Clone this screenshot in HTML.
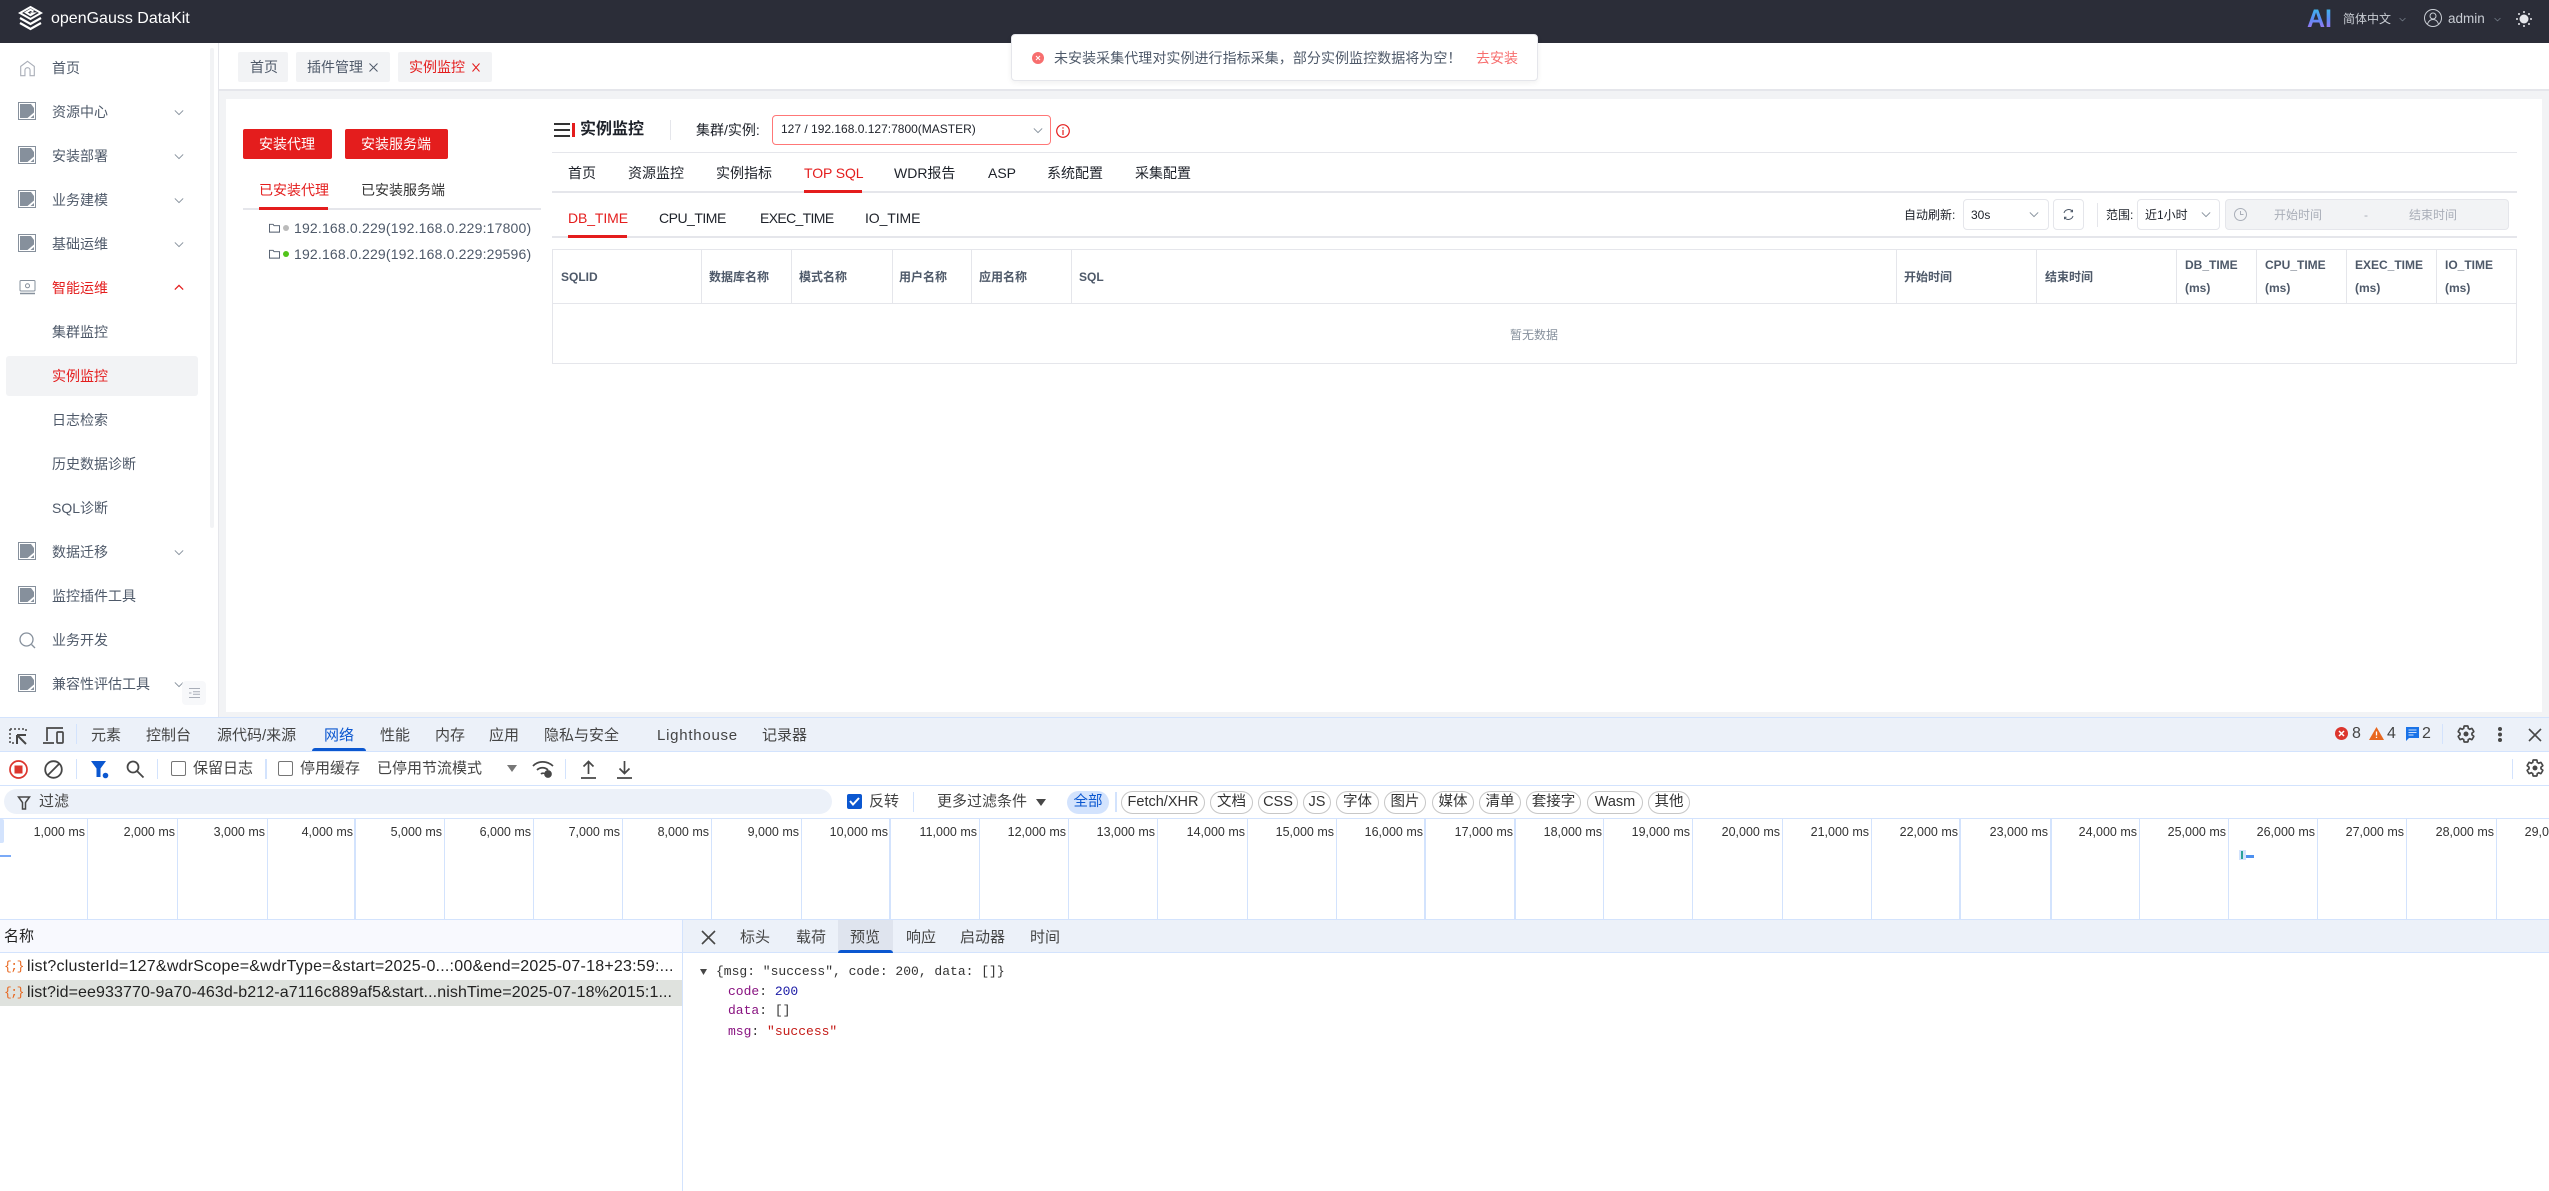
<!DOCTYPE html>
<html lang="zh"><head><meta charset="utf-8"><title>openGauss DataKit</title>
<style>
*{box-sizing:border-box}
html,body{margin:0;padding:0;width:2549px;height:1191px;overflow:hidden;background:#fff;font-family:"Liberation Sans","Noto Sans CJK SC",sans-serif}
.a{position:absolute}
.t{position:absolute;white-space:nowrap;line-height:20px;height:20px}
.s{font-size:14px;color:#4e5969}
.r{color:#e41d1d!important}
.th{font-size:12px;font-weight:700;color:#4e5969}
.m{font-size:14px;color:#1d2129}
.d{font-size:15px;color:#444;}
.chip{position:absolute;top:791px;height:23px;border:1px solid #c7c7c7;border-radius:12px;font-size:14.5px;line-height:21px;text-align:center;color:#333;background:#fff}
.gl{position:absolute;top:819px;height:100px;width:1px;background:#d3e3fd}
.gl2{width:2px}
.lb{position:absolute;top:822px;width:118px;text-align:right;font-size:12.5px;line-height:20px;color:#333}
.sep{position:absolute;width:1px;background:#d3e3fd}
.cs{position:absolute;top:249px;width:1px;height:54px;background:#e5e6eb}
svg{position:absolute;overflow:visible}
</style></head><body>
<svg width="0" height="0" style="position:absolute"><defs>
<symbol id="ic" viewBox="0 0 18 18"><rect x=".5" y=".5" width="17" height="17" fill="#fff" stroke="#86909c"/><path d="M2 2h11l3 4v10H2z" fill="#86909c"/><path d="M9.500 16l6.500-5.500v2.500L12.500 16z" fill="#fff"/></symbol>
<symbol id="gear" viewBox="0 0 24 24"><path fill="none" stroke="#474747" stroke-width="2" d="M19.140 12.940c.04-.3.06-.61.06-.94 0-.32-.02-.64-.07-.94l2.030-1.580c.18-.14.23-.41.12-.61l-1.920-3.320c-.12-.22-.37-.29-.59-.22l-2.390.96c-.5-.38-1.030-.7-1.620-.94l-.36-2.540c-.04-.24-.24-.41-.48-.41h-3.840c-.24 0-.43.17-.47.41l-.36 2.540c-.59.24-1.130.57-1.620.94l-2.390-.96c-.22-.08-.47 0-.59.22L2.740 8.870c-.12.21-.08.47.12.61l2.030 1.580c-.05.3-.09.63-.09.94s.02.64.07.94l-2.030 1.580c-.18.14-.23.41-.12.61l1.920 3.320c.12.22.37.29.59.22l2.390-.96c.5.38 1.030.7 1.620.94l.36 2.540c.05.24.24.41.48.41h3.840c.24 0 .44-.17.47-.41l.36-2.540c.59-.24 1.130-.56 1.620-.94l2.390.96c.22.08.47 0 .59-.22l1.920-3.320c.12-.22.07-.47-.12-.61z"/><circle cx="12" cy="12" r="3" fill="#474747"/></symbol>
<symbol id="chev" viewBox="0 0 12 8"><path d="M1 1.500l5 5 5-5" fill="none" stroke="#86909c" stroke-width="1.100"/></symbol>
<symbol id="folder" viewBox="0 0 12 10"><path d="M.5 1h4l1 1.500h6v7H.5z" fill="none" stroke="#4e5969"/></symbol>
<linearGradient id="aig" x1="0" y1="0" x2="0" y2="1"><stop offset="0" stop-color="#35c6e6"/><stop offset=".5" stop-color="#5a8cf5"/><stop offset="1" stop-color="#c06cf0"/></linearGradient>
</defs></svg>

<!-- top header -->
<div class="a" style="left:0;top:0;width:2549px;height:43px;background:#2b2d38"></div>
<svg style="left:18px;top:5px" width="25" height="27" viewBox="0 0 25 27" fill="none" stroke="#fff" stroke-width="2"><path d="M12.500 2L23 8l-10.500 6L2 8z"/><path d="M15.500 6.500l-3-1.700-4.500 2.700 4.500 2.700 3-1.800h-3"/><path d="M2 13l10.500 6L23 13M2 18l10.500 6L23 18" stroke-width="2.200"/></svg>
<div class="t" style="left:51px;top:9px;font-size:16px;color:#fff">openGauss DataKit</div>
<svg style="left:2306px;top:4px" width="28" height="26"><text x="1" y="23" font-family="Liberation Sans" font-weight="700" font-size="25" fill="url(#aig)">AI</text></svg>
<div class="t" style="left:2343px;top:9px;font-size:12px;color:#c9cdd4">简体中文</div>
<svg style="left:2399px;top:17px" width="7" height="5"><use href="#chev" width="7" height="5"/></svg>
<svg style="left:2424px;top:9px" width="18" height="18" viewBox="0 0 18 18" fill="none" stroke="#c9cdd4"><circle cx="9" cy="9" r="8.500"/><circle cx="9" cy="7" r="3"/><path d="M3.500 15c1-3 3-4.500 5.500-4.500s4.500 1.500 5.500 4.500"/></svg>
<div class="t" style="left:2448px;top:9px;font-size:13.500px;color:#c9cdd4">admin</div>
<svg style="left:2494px;top:17px" width="7" height="5"><use href="#chev" width="7" height="5"/></svg>
<svg style="left:2516px;top:11px" width="16" height="16" viewBox="0 0 16 16" fill="#e5e6eb"><circle cx="8" cy="8" r="4.500"/><circle cx="8" cy="1" r="1"/><circle cx="8" cy="15" r="1"/><circle cx="1" cy="8" r="1"/><circle cx="15" cy="8" r="1"/><circle cx="3" cy="3" r="1"/><circle cx="13" cy="3" r="1"/><circle cx="3" cy="13" r="1"/><circle cx="13" cy="13" r="1"/></svg>

<!-- sidebar -->
<div class="a" style="left:218px;top:43px;width:1px;height:674px;background:#e5e6eb"></div>
<div class="a" style="left:210px;top:48px;width:4px;height:480px;background:#f2f3f5;border-radius:2px"></div>
<div class="a" style="left:6px;top:356px;width:192px;height:40px;background:#f2f3f5;border-radius:3px"></div>
<svg style="left:19px;top:60px" width="17" height="17" viewBox="0 0 20 20" fill="none" stroke="#a9aeb8" stroke-width="1.300"><path d="M2 7.500L10 1.500l8 6V18.500h-5V12a3 3 0 0 0-6 0v6.500H2z"/></svg>
<div class="t s" style="left:52px;top:58px">首页</div>
<svg style="left:18px;top:102px" width="18" height="18"><use href="#ic" width="18" height="18"/></svg>
<div class="t s" style="left:52px;top:102px">资源中心</div>
<svg style="left:174px;top:109px" width="10" height="7"><use href="#chev" width="10" height="7"/></svg>
<svg style="left:18px;top:146px" width="18" height="18"><use href="#ic" width="18" height="18"/></svg>
<div class="t s" style="left:52px;top:146px">安装部署</div>
<svg style="left:174px;top:153px" width="10" height="7"><use href="#chev" width="10" height="7"/></svg>
<svg style="left:18px;top:190px" width="18" height="18"><use href="#ic" width="18" height="18"/></svg>
<div class="t s" style="left:52px;top:190px">业务建模</div>
<svg style="left:174px;top:197px" width="10" height="7"><use href="#chev" width="10" height="7"/></svg>
<svg style="left:18px;top:234px" width="18" height="18"><use href="#ic" width="18" height="18"/></svg>
<div class="t s" style="left:52px;top:234px">基础运维</div>
<svg style="left:174px;top:241px" width="10" height="7"><use href="#chev" width="10" height="7"/></svg>
<svg style="left:19px;top:280px" width="17" height="15" viewBox="0 0 17 15" fill="none" stroke="#86909c"><rect x="1" y=".5" width="15" height="10.500" rx="1"/><circle cx="8.500" cy="5.800" r="2"/><path d="M1 13.500h15" stroke-width="1.500"/></svg>
<div class="t s r" style="left:52px;top:278px">智能运维</div>
<svg style="left:174px;top:284px" width="10" height="7" viewBox="0 0 12 8"><path d="M1 6.500l5-5 5 5" fill="none" stroke="#e41d1d" stroke-width="1.500"/></svg>
<div class="t s" style="left:52px;top:322px">集群监控</div>
<div class="t s r" style="left:52px;top:366px">实例监控</div>
<div class="t s" style="left:52px;top:410px">日志检索</div>
<div class="t s" style="left:52px;top:454px">历史数据诊断</div>
<div class="t s" style="left:52px;top:498px">SQL诊断</div>
<svg style="left:18px;top:542px" width="18" height="18"><use href="#ic" width="18" height="18"/></svg>
<div class="t s" style="left:52px;top:542px">数据迁移</div>
<svg style="left:174px;top:549px" width="10" height="7"><use href="#chev" width="10" height="7"/></svg>
<svg style="left:18px;top:586px" width="18" height="18"><use href="#ic" width="18" height="18"/></svg>
<div class="t s" style="left:52px;top:586px">监控插件工具</div>
<svg style="left:19px;top:632px" width="17" height="17" viewBox="0 0 17 17" fill="none" stroke="#86909c" stroke-width="1.300"><circle cx="7.500" cy="7.500" r="6.500"/><path d="M12.500 12.500L16 16"/></svg>
<div class="t s" style="left:52px;top:630px">业务开发</div>
<svg style="left:18px;top:674px" width="18" height="18"><use href="#ic" width="18" height="18"/></svg>
<div class="t s" style="left:52px;top:674px">兼容性评估工具</div>
<svg style="left:174px;top:681px" width="10" height="7"><use href="#chev" width="10" height="7"/></svg>
<div class="a" style="left:182px;top:681px;width:24px;height:24px;background:#f7f8fa;border-radius:4px"></div>
<svg style="left:189px;top:688px" width="11" height="10" viewBox="0 0 11 10" stroke="#a9aeb8" fill="none"><path d="M0 .5h11M4 3.700h7M4 6.300h7M0 9.500h11M0 5h2.500"/></svg>

<!-- tabs bar -->
<div class="a" style="left:219px;top:89px;width:2330px;height:2px;background:#e5e6eb"></div>
<div class="a" style="left:238px;top:52px;width:50px;height:30px;background:#f2f3f5;border-radius:2px"></div>
<div class="t s" style="left:250px;top:57px">首页</div>
<div class="a" style="left:296px;top:52px;width:94px;height:30px;background:#f2f3f5;border-radius:2px"></div>
<div class="t s" style="left:307px;top:57px">插件管理</div>
<svg style="left:369px;top:63px" width="9" height="9" stroke="#4e5969"><path d="M.5.500l8 8M8.500.500l-8 8"/></svg>
<div class="a" style="left:398px;top:52px;width:94px;height:30px;background:#f2f3f5;border-radius:2px"></div>
<div class="t s r" style="left:409px;top:57px">实例监控</div>
<svg style="left:472px;top:63px" width="8" height="9" stroke="#e41d1d"><path d="M.5.500l7 8M7.500.500l-7 8"/></svg>

<!-- main -->
<div class="a" style="left:219px;top:91px;width:2330px;height:626px;background:#f2f3f5"></div>
<div class="a" style="left:226px;top:99px;width:2316px;height:613px;background:#fff"></div>

<div class="a" style="left:243px;top:129px;width:89px;height:30px;background:#e41d1d;border-radius:2px"></div>
<div class="t" style="left:259px;top:134px;font-size:14px;color:#fff">安装代理</div>
<div class="a" style="left:345px;top:129px;width:103px;height:30px;background:#e41d1d;border-radius:2px"></div>
<div class="t" style="left:361px;top:134px;font-size:14px;color:#fff">安装服务端</div>
<div class="a" style="left:243px;top:208px;width:298px;height:2px;background:#e5e6eb"></div>
<div class="a" style="left:259px;top:207px;width:69px;height:3px;background:#e41d1d"></div>
<div class="t s r" style="left:259px;top:180px">已安装代理</div>
<div class="t m" style="left:361px;top:180px;color:#333">已安装服务端</div>
<svg style="left:269px;top:223px" width="11" height="10"><use href="#folder" width="11" height="10"/></svg>
<div class="a" style="left:283px;top:225px;width:6px;height:6px;border-radius:50%;background:#bbb"></div>
<div class="t s" style="left:294px;top:218px;letter-spacing:.18px">192.168.0.229(192.168.0.229:17800)</div>
<svg style="left:269px;top:249px" width="11" height="10"><use href="#folder" width="11" height="10"/></svg>
<div class="a" style="left:283px;top:251px;width:6px;height:6px;border-radius:50%;background:#52c41a"></div>
<div class="t s" style="left:294px;top:244px;letter-spacing:.18px">192.168.0.229(192.168.0.229:29596)</div>

<!-- content header -->
<svg style="left:554px;top:123px" width="16" height="14" viewBox="0 0 16 14"><path d="M0 1h16M0 7h16M0 13h16" stroke="#333" stroke-width="2"/></svg>
<div class="a" style="left:572px;top:123px;width:3px;height:14px;background:#e41d1d"></div>
<div class="t" style="left:580px;top:120px;font-size:16px;font-weight:700;color:#1d2129">实例监控</div>
<div class="a" style="left:670px;top:120px;width:1px;height:20px;background:#e5e6eb"></div>
<div class="t m" style="left:696px;top:120px">集群/实例:</div>
<div class="a" style="left:772px;top:115px;width:279px;height:30px;border:1px solid #f77;border-radius:4px"></div>
<div class="t" style="left:781px;top:119px;font-size:12px;color:#1d2129">127 / 192.168.0.127:7800(MASTER)</div>
<svg style="left:1033px;top:127px" width="10" height="7"><use href="#chev" width="10" height="7"/></svg>
<svg style="left:1056px;top:124px" width="14" height="14" viewBox="0 0 14 14" fill="none" stroke="#e41d1d" stroke-width="1.200"><circle cx="7" cy="7" r="6.300"/><path d="M7 6v5M7 3.200v1.400"/></svg>
<div class="a" style="left:552px;top:152px;width:1965px;height:1px;background:#e5e6eb"></div>

<div class="t m" style="left:568px;top:163px">首页</div>
<div class="t m" style="left:628px;top:163px">资源监控</div>
<div class="t m" style="left:716px;top:163px">实例指标</div>
<div class="t m r" style="left:804px;top:163px;letter-spacing:-.1px">TOP SQL</div>
<div class="t m" style="left:894px;top:163px">WDR报告</div>
<div class="t m" style="left:988px;top:163px">ASP</div>
<div class="t m" style="left:1047px;top:163px">系统配置</div>
<div class="t m" style="left:1135px;top:163px">采集配置</div>
<div class="a" style="left:552px;top:191px;width:1965px;height:2px;background:#e5e6eb"></div>
<div class="a" style="left:804px;top:190px;width:58px;height:3px;background:#e41d1d"></div>

<div class="t m r" style="left:568px;top:208px;letter-spacing:-.1px">DB_TIME</div>
<div class="t m" style="left:659px;top:208px;letter-spacing:-.5px">CPU_TIME</div>
<div class="t m" style="left:760px;top:208px;letter-spacing:-.65px">EXEC_TIME</div>
<div class="t m" style="left:865px;top:208px;letter-spacing:-.1px">IO_TIME</div>
<div class="a" style="left:552px;top:236px;width:1965px;height:2px;background:#e5e6eb"></div>
<div class="a" style="left:568px;top:235px;width:59px;height:3px;background:#e41d1d"></div>

<!-- right controls -->
<div class="t" style="left:1904px;top:205px;font-size:12px;color:#1d2129">自动刷新:</div>
<div class="a" style="left:1963px;top:199px;width:86px;height:31px;border:1px solid #e5e6eb;border-radius:4px"></div>
<div class="t" style="left:1971px;top:205px;font-size:12px;color:#1d2129">30s</div>
<svg style="left:2029px;top:211px" width="10" height="7"><use href="#chev" width="10" height="7"/></svg>
<div class="a" style="left:2053px;top:199px;width:31px;height:31px;border:1px solid #e5e6eb;border-radius:4px"></div>
<svg style="left:2063px;top:209px" width="11" height="11" viewBox="0 0 11 11" fill="none" stroke="#4e5969"><path d="M1 4a4.800 4.800 0 0 1 8.500-1.500M10 7a4.800 4.800 0 0 1-8.500 1.500M9.500.8v2h-2M1.500 10.200v-2h2"/></svg>
<div class="a" style="left:2097px;top:203px;width:1px;height:24px;background:#e5e6eb"></div>
<div class="t" style="left:2106px;top:205px;font-size:12px;color:#1d2129">范围:</div>
<div class="a" style="left:2137px;top:199px;width:83px;height:31px;border:1px solid #e5e6eb;border-radius:4px"></div>
<div class="t" style="left:2145px;top:205px;font-size:12px;color:#1d2129">近1小时</div>
<svg style="left:2201px;top:211px" width="10" height="7"><use href="#chev" width="10" height="7"/></svg>
<div class="a" style="left:2225px;top:199px;width:284px;height:31px;border:1px solid #e5e6eb;border-radius:4px;background:#f2f3f5"></div>
<svg style="left:2234px;top:208px" width="13" height="13" viewBox="0 0 13 13" fill="none" stroke="#a9aeb8"><circle cx="6.500" cy="6.500" r="6"/><path d="M6.500 3v3.500h3"/></svg>
<div class="t" style="left:2274px;top:205px;font-size:12px;color:#a9aeb8">开始时间</div>
<div class="t" style="left:2364px;top:205px;font-size:12px;color:#a9aeb8">-</div>
<div class="t" style="left:2409px;top:205px;font-size:12px;color:#a9aeb8">结束时间</div>

<!-- table -->
<div class="a" style="left:552px;top:249px;width:1965px;height:115px;border:1px solid #e5e6eb"></div>
<div class="a" style="left:552px;top:303px;width:1965px;height:1px;background:#e5e6eb"></div>
<i class="cs" style="left:701px"></i><i class="cs" style="left:791px"></i><i class="cs" style="left:892px"></i><i class="cs" style="left:971px"></i><i class="cs" style="left:1071px"></i><i class="cs" style="left:1896px"></i><i class="cs" style="left:2036px"></i><i class="cs" style="left:2176px"></i><i class="cs" style="left:2256px"></i><i class="cs" style="left:2346px"></i><i class="cs" style="left:2436px"></i>
<div class="t th" style="left:561px;top:267px">SQLID</div>
<div class="t th" style="left:709px;top:267px">数据库名称</div>
<div class="t th" style="left:799px;top:267px">模式名称</div>
<div class="t th" style="left:899px;top:267px">用户名称</div>
<div class="t th" style="left:979px;top:267px">应用名称</div>
<div class="t th" style="left:1079px;top:267px">SQL</div>
<div class="t th" style="left:1904px;top:267px">开始时间</div>
<div class="t th" style="left:2045px;top:267px">结束时间</div>
<div class="t th" style="left:2185px;top:255px">DB_TIME</div><div class="t th" style="left:2185px;top:278px">(ms)</div>
<div class="t th" style="left:2265px;top:255px">CPU_TIME</div><div class="t th" style="left:2265px;top:278px">(ms)</div>
<div class="t th" style="left:2355px;top:255px">EXEC_TIME</div><div class="t th" style="left:2355px;top:278px">(ms)</div>
<div class="t th" style="left:2445px;top:255px">IO_TIME</div><div class="t th" style="left:2445px;top:278px">(ms)</div>
<div class="t" style="left:1510px;top:325px;font-size:12px;color:#86909c">暂无数据</div>

<!-- notification -->
<div class="a" style="left:1011px;top:34px;width:527px;height:47px;background:#fff;border:1px solid #e5e6eb;border-radius:4px;box-shadow:0 2px 6px rgba(0,0,0,.06)"></div>
<svg style="left:1032px;top:52px" width="12" height="12" viewBox="0 0 12 12"><circle cx="6" cy="6" r="6" fill="#f76e6e"/><path d="M4 4l4 4M8 4l-4 4" stroke="#fff"/></svg>
<div class="t s" style="left:1054px;top:48px;letter-spacing:.05px">未安装采集代理对实例进行指标采集，部分实例监控数据将为空！</div>
<div class="t" style="left:1476px;top:48px;font-size:14px;color:#f76e6e">去安装</div>

<!-- devtools -->
<div class="a" style="left:0;top:717px;width:2549px;height:35px;background:#ecf1f9;border-top:1px solid #d3e3fd;border-bottom:1px solid #d3e3fd"></div>
<svg style="left:9px;top:728px" width="19" height="18" viewBox="0 0 19 18" fill="none" stroke="#474747" stroke-width="1.500"><path d="M1 1h16v3M1 1v14h4" stroke-dasharray="2 2"/><path d="M8 7h9M8 7v9M8 7l9 9" stroke-width="2"/></svg>
<svg style="left:43px;top:727px" width="21" height="18" viewBox="0 0 21 18" fill="none" stroke="#474747" stroke-width="1.700"><path d="M4 14V1h16M0 16h11"/><rect x="14" y="5" width="6" height="11" rx="1"/></svg>
<div class="sep" style="left:76px;top:724px;height:20px"></div>
<div class="t d" style="left:91px;top:726px">元素</div>
<div class="t d" style="left:146px;top:726px">控制台</div>
<div class="t d" style="left:217px;top:726px">源代码/来源</div>
<div class="t d" style="left:324px;top:726px;color:#0b57d0">网络</div>
<div class="a" style="left:312px;top:748px;width:54px;height:3px;background:#0b57d0;border-radius:3px 3px 0 0"></div>
<div class="t d" style="left:380px;top:726px">性能</div>
<div class="t d" style="left:435px;top:726px">内存</div>
<div class="t d" style="left:489px;top:726px">应用</div>
<div class="t d" style="left:544px;top:726px">隐私与安全</div>
<div class="t d" style="left:657px;top:726px;font-size:15px;letter-spacing:.75px">Lighthouse</div>
<div class="t d" style="left:762px;top:726px">记录器</div>

<svg style="left:2335px;top:727px" width="13" height="13" viewBox="0 0 13 13"><circle cx="6.500" cy="6.500" r="6.500" fill="#dc362e"/><path d="M4 4l5 5M9 4l-5 5" stroke="#fff" stroke-width="1.500"/></svg>
<div class="t d" style="left:2352px;top:724px;font-size:16px">8</div>
<svg style="left:2369px;top:727px" width="15" height="13" viewBox="0 0 15 13"><path d="M7.500 0L15 13H0z" fill="#e8671f"/><path d="M7.500 4.500v4M7.500 9.800v1.200" stroke="#fff" stroke-width="1.300"/></svg>
<div class="t d" style="left:2387px;top:724px;font-size:16px">4</div>
<svg style="left:2405px;top:727px" width="14" height="14" viewBox="0 0 14 14"><path d="M1 0h13v11H4l-3 3z" fill="#1a73e8"/><path d="M3.500 3h8M3.500 5.500h8M3.500 8h5" stroke="#cfe0fc"/></svg>
<div class="t d" style="left:2422px;top:724px;font-size:16px">2</div>
<div class="sep" style="left:2442px;top:724px;height:20px"></div>
<svg style="left:2456px;top:724px" width="20" height="20"><use href="#gear" width="20" height="20"/></svg>
<svg style="left:2498px;top:727px" width="4" height="15" fill="#474747"><circle cx="2" cy="2" r="2"/><circle cx="2" cy="7.500" r="2"/><circle cx="2" cy="13" r="2"/></svg>
<svg style="left:2529px;top:729px" width="12" height="12" stroke="#474747" stroke-width="1.600"><path d="M0 0l12 12M12 0L0 12"/></svg>

<!-- row2 -->
<div class="a" style="left:0;top:785px;width:2549px;height:1px;background:#d3e3fd"></div>
<svg style="left:9px;top:760px" width="19" height="19" viewBox="0 0 19 19"><circle cx="9.500" cy="9.500" r="8.500" fill="none" stroke="#dc362e" stroke-width="1.700"/><rect x="5.500" y="5.500" width="8" height="8" fill="#dc362e"/></svg>
<svg style="left:44px;top:760px" width="19" height="19" viewBox="0 0 19 19" fill="none" stroke="#474747" stroke-width="1.800"><circle cx="9.500" cy="9.500" r="8.300"/><path d="M15 4L4 15"/></svg>
<div class="sep" style="left:76px;top:759px;height:20px"></div>
<svg style="left:91px;top:760px" width="19" height="19" viewBox="0 0 19 19" fill="#0b57d0"><path d="M0 1h15L9.500 8.500V17h-4V8.500z"/><circle cx="14.500" cy="15.500" r="2.800"/></svg>
<svg style="left:126px;top:760px" width="18" height="18" viewBox="0 0 18 18" fill="none" stroke="#474747" stroke-width="1.800"><circle cx="7" cy="7" r="5.500"/><path d="M11 11l6.500 6.500"/></svg>
<div class="sep" style="left:157px;top:759px;height:20px"></div>
<div class="a" style="left:171px;top:761px;width:15px;height:15px;border:1.500px solid #757575;border-radius:2px;background:#fff"></div>
<div class="t d" style="left:193px;top:759px">保留日志</div>
<div class="sep" style="left:265px;top:759px;height:20px;width:2px"></div>
<div class="a" style="left:278px;top:761px;width:15px;height:15px;border:1.500px solid #757575;border-radius:2px;background:#fff"></div>
<div class="t d" style="left:300px;top:759px">停用缓存</div>
<div class="t d" style="left:377px;top:759px">已停用节流模式</div>
<svg style="left:507px;top:765px" width="10" height="7" fill="#777"><path d="M0 0h10L5 7z"/></svg>
<svg style="left:532px;top:760px" width="22" height="19" viewBox="0 0 22 19" fill="none" stroke="#474747" stroke-width="1.700"><path d="M1 6c5-5.500 14-5.500 20 0M5 10c3-3 8-3 11 0M9 14c1-1 3-1 3 0"/><circle cx="16" cy="14" r="3" fill="#474747"/></svg>
<div class="sep" style="left:565px;top:759px;height:20px"></div>
<svg style="left:580px;top:760px" width="17" height="19" viewBox="0 0 17 19" fill="none" stroke="#474747" stroke-width="1.700"><path d="M8.500 14V2M3.500 6.500l5-5 5 5M1 18h15"/></svg>
<svg style="left:616px;top:760px" width="17" height="19" viewBox="0 0 17 19" fill="none" stroke="#474747" stroke-width="1.700"><path d="M8.500 1v12M3.500 8.500l5 5 5-5M1 18h15"/></svg>
<div class="sep" style="left:2512px;top:759px;height:20px"></div>
<svg style="left:2525px;top:758px" width="20" height="20"><use href="#gear" width="20" height="20"/></svg>

<!-- row3 -->
<div class="a" style="left:0;top:818px;width:2549px;height:1px;background:#d3e3fd"></div>
<div class="a" style="left:4px;top:789px;width:828px;height:25px;background:#ecf1f9;border-radius:13px"></div>
<svg style="left:18px;top:796px" width="12" height="13" viewBox="0 0 12 13" fill="none" stroke="#474747" stroke-width="1.500"><path d="M.5 1h11L7.500 6.500V13h-3V6.500z"/></svg>
<div class="t d" style="left:39px;top:792px">过滤</div>
<div class="a" style="left:847px;top:794px;width:15px;height:15px;background:#0b57d0;border-radius:2px"></div>
<svg style="left:849px;top:797px" width="11" height="9" fill="none" stroke="#fff" stroke-width="2"><path d="M1 4l3 3.500L10 1"/></svg>
<div class="t d" style="left:869px;top:792px">反转</div>
<div class="sep" style="left:913px;top:792px;height:20px"></div>
<div class="t d" style="left:937px;top:792px">更多过滤条件</div>
<svg style="left:1036px;top:799px" width="10" height="7" fill="#474747"><path d="M0 0h10L5 7z"/></svg>
<div class="a" style="left:1067px;top:791px;width:42px;height:23px;background:#d3e3fd;border-radius:12px;font-size:14.500px;line-height:23px;text-align:center;color:#0b57d0">全部</div>
<div class="sep" style="left:1115px;top:792px;height:20px;width:2px"></div>
<div class="chip" style="left:1121px;width:84px">Fetch/XHR</div>
<div class="chip" style="left:1210px;width:43px">文档</div>
<div class="chip" style="left:1258px;width:40px">CSS</div>
<div class="chip" style="left:1303px;width:28px">JS</div>
<div class="chip" style="left:1336px;width:43px">字体</div>
<div class="chip" style="left:1384px;width:42px">图片</div>
<div class="chip" style="left:1432px;width:42px">媒体</div>
<div class="chip" style="left:1479px;width:42px">清单</div>
<div class="chip" style="left:1526px;width:55px">套接字</div>
<div class="chip" style="left:1587px;width:56px">Wasm</div>
<div class="chip" style="left:1648px;width:42px">其他</div>

<!-- overview -->
<i class="gl" style="left:87px"></i><i class="gl" style="left:177px"></i><i class="gl" style="left:267px"></i><i class="gl gl2" style="left:354px"></i><i class="gl" style="left:444px"></i><i class="gl" style="left:533px"></i><i class="gl" style="left:622px"></i><i class="gl" style="left:711px"></i><i class="gl" style="left:801px"></i><i class="gl gl2" style="left:889px"></i><i class="gl" style="left:979px"></i><i class="gl" style="left:1068px"></i><i class="gl" style="left:1157px"></i><i class="gl" style="left:1247px"></i><i class="gl" style="left:1336px"></i><i class="gl gl2" style="left:1424px"></i><i class="gl gl2" style="left:1514px"></i><i class="gl" style="left:1603px"></i><i class="gl" style="left:1692px"></i><i class="gl" style="left:1782px"></i><i class="gl" style="left:1871px"></i><i class="gl gl2" style="left:1959px"></i><i class="gl gl2" style="left:2050px"></i><i class="gl" style="left:2139px"></i><i class="gl" style="left:2228px"></i><i class="gl" style="left:2317px"></i><i class="gl" style="left:2406px"></i><i class="gl" style="left:2496px"></i>
<div class="lb" style="left:-33px">1,000 ms</div><div class="lb" style="left:57px">2,000 ms</div><div class="lb" style="left:147px">3,000 ms</div><div class="lb" style="left:235px">4,000 ms</div><div class="lb" style="left:324px">5,000 ms</div><div class="lb" style="left:413px">6,000 ms</div><div class="lb" style="left:502px">7,000 ms</div><div class="lb" style="left:591px">8,000 ms</div><div class="lb" style="left:681px">9,000 ms</div><div class="lb" style="left:770px">10,000 ms</div><div class="lb" style="left:859px">11,000 ms</div><div class="lb" style="left:948px">12,000 ms</div><div class="lb" style="left:1037px">13,000 ms</div><div class="lb" style="left:1127px">14,000 ms</div><div class="lb" style="left:1216px">15,000 ms</div><div class="lb" style="left:1305px">16,000 ms</div><div class="lb" style="left:1395px">17,000 ms</div><div class="lb" style="left:1484px">18,000 ms</div><div class="lb" style="left:1572px">19,000 ms</div><div class="lb" style="left:1662px">20,000 ms</div><div class="lb" style="left:1751px">21,000 ms</div><div class="lb" style="left:1840px">22,000 ms</div><div class="lb" style="left:1930px">23,000 ms</div><div class="lb" style="left:2019px">24,000 ms</div><div class="lb" style="left:2108px">25,000 ms</div><div class="lb" style="left:2197px">26,000 ms</div><div class="lb" style="left:2286px">27,000 ms</div><div class="lb" style="left:2376px">28,000 ms</div><div class="lb" style="left:2465px">29,000 ms</div>
<div class="a" style="left:0;top:819px;width:4px;height:24px;background:#d3e3fd;border-radius:0 2px 2px 0"></div>
<div class="a" style="left:0;top:855px;width:11px;height:2px;background:#7baaf7"></div>
<div class="a" style="left:2239px;top:850px;width:7px;height:10px;background:#d3e3fd"></div>
<div class="a" style="left:2241px;top:851px;width:2px;height:8px;background:#2aa198"></div>
<div class="a" style="left:2246px;top:855px;width:8px;height:3px;background:#4d90f0"></div>

<!-- split -->
<div class="a" style="left:0;top:919px;width:2549px;height:1px;background:#d3e3fd"></div>
<div class="a" style="left:0;top:920px;width:682px;height:33px;background:#f8f9fe;border-bottom:1px solid #d3e3fd"></div>
<div class="t d" style="left:4px;top:927px;color:#222">名称</div>
<div class="a" style="left:682px;top:920px;width:1867px;height:33px;background:#ecf1f9;border-bottom:1px solid #d3e3fd;border-left:1px solid #d3e3fd"></div>
<svg style="left:702px;top:931px" width="13" height="13" stroke="#474747" stroke-width="1.600"><path d="M0 0l13 13M13 0L0 13"/></svg>
<div class="t d" style="left:740px;top:928px">标头</div>
<div class="t d" style="left:796px;top:928px">载荷</div>
<div class="a" style="left:838px;top:920px;width:55px;height:33px;background:#dfe4ee"></div>
<div class="a" style="left:838px;top:950px;width:55px;height:3px;background:#0b57d0;border-radius:3px 3px 0 0"></div>
<div class="t d" style="left:850px;top:928px">预览</div>
<div class="t d" style="left:906px;top:928px">响应</div>
<div class="t d" style="left:960px;top:928px">启动器</div>
<div class="t d" style="left:1030px;top:928px">时间</div>
<div class="a" style="left:682px;top:953px;width:1px;height:238px;background:#d3e3fd"></div>
<div class="a" style="left:0;top:980px;width:682px;height:26px;background:#dfe2de"></div>
<div class="t" style="left:4px;top:957px;font-size:13px;font-family:'Liberation Mono',monospace;color:#e8671f;letter-spacing:-1.500px">{;}</div>
<div class="t" style="left:4px;top:983px;font-size:13px;font-family:'Liberation Mono',monospace;color:#e8671f;letter-spacing:-1.500px">{;}</div>
<div class="t d" style="left:27px;top:957px;width:652px;overflow:hidden;color:#222;font-size:16px;letter-spacing:.22px">list?clusterId=127&amp;wdrScope=&amp;wdrType=&amp;start=2025-0...:00&amp;end=2025-07-18+23:59:...</div>
<div class="t d" style="left:27px;top:983px;width:652px;overflow:hidden;color:#222;font-size:16px;letter-spacing:.1px">list?id=ee933770-9a70-463d-b212-a7116c889af5&amp;start...nishTime=2025-07-18%2015:1...</div>
<svg style="left:700px;top:969px" width="7" height="6" fill="#474747"><path d="M0 0h7L3.500 6z"/></svg>
<div class="t" style="left:716px;top:962px;font:13px/20px 'Liberation Mono',monospace;color:#333;white-space:pre">{msg: "success", code: 200, data: []}</div>
<div class="t" style="left:728px;top:982px;font:13px/20px 'Liberation Mono',monospace;white-space:pre"><span style="color:#881280">code</span><span style="color:#333">: </span><span style="color:#1a1aa6">200</span></div>
<div class="t" style="left:728px;top:1001px;font:13px/20px 'Liberation Mono',monospace;white-space:pre"><span style="color:#881280">data</span><span style="color:#333">: []</span></div>
<div class="t" style="left:728px;top:1022px;font:13px/20px 'Liberation Mono',monospace;white-space:pre"><span style="color:#881280">msg</span><span style="color:#333">: </span><span style="color:#c41a16">"success"</span></div>
</body></html>
